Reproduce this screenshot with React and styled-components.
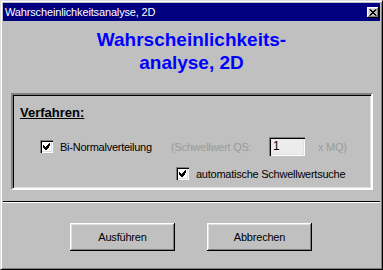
import styled, { createGlobalStyle } from "styled-components"

const GlobalStyle = createGlobalStyle`
    body {
        margin: 0;
        background: #c0c0c0;
        font-family: "Liberation Sans", Arial, sans-serif;
    }
`

export default function App(){
    return(
        <>
            <GlobalStyle />
            <Window>
                <TitleBar>
                    <span>Wahrscheinlichkeitsanalyse, 2D</span>
                    <CloseButton>
                        <svg width="8" height="7" viewBox="0 0 8 7" shapeRendering="crispEdges">
                            <path d="M0 0h2v1h-2zM6 0h2v1h-2zM1 1h2v1h-2zM5 1h2v1h-2zM2 2h4v1h-4zM3 3h2v1h-2zM2 4h4v1h-4zM1 5h2v1h-2zM5 5h2v1h-2zM0 6h2v1h-2zM6 6h2v1h-2z" fill="#000" />
                        </svg>
                    </CloseButton>
                </TitleBar>

                <Heading>Wahrscheinlichkeits-<br />analyse, 2D</Heading>

                <Group>
                    <GroupTitle>Verfahren:</GroupTitle>
                    <Row indent={27}>
                        <Checkbox checked />
                        <Label width={111}>Bi-Normalverteilung</Label>
                        <Label width={98} disabled>(Schwellwert QS:</Label>
                        <Field>1</Field>
                        <Label disabled>x MQ)</Label>
                    </Row>
                    <Row indent={163} top={11}>
                        <Checkbox checked />
                        <Label>automatische Schwellwertsuche</Label>
                    </Row>
                </Group>

                <Separator />

                <Footer>
                    <Button>Ausführen</Button>
                    <Button>Abbrechen</Button>
                </Footer>
            </Window>
        </>
    )
}

function Checkbox({ checked }){
    return(
        <CheckBox>
            {checked && (
                <svg width="7" height="7" viewBox="0 0 7 7" shapeRendering="crispEdges">
                    <path d="M6 0h1v3h-1zM5 1h1v4h-1zM4 2h1v4h-1zM3 3h1v4h-1zM2 4h1v3h-1zM1 3h1v3h-1zM0 2h1v3h-1z" fill="#000" />
                </svg>
            )}
        </CheckBox>
    )
}

const sunken = `
    box-shadow:
        inset 1px 1px #808080,
        inset 2px 2px #000,
        inset -1px -1px #fff,
        inset -2px -2px #dfdfdf;
`

const raised = `
    box-shadow:
        inset -1px -1px #000,
        inset 1px 1px #fff,
        inset -2px -2px #808080,
        inset 2px 2px #dfdfdf;
`

const Window = styled.div`
    width: 383px;
    height: 270px;
    box-sizing: border-box;
    background: #c0c0c0;
    border: 1px solid;
    border-color: #dfdfdf #000 #000 #dfdfdf;
    box-shadow: inset 1px 1px #fff, inset -1px -1px #808080;
    padding: 2px;
    display: flex;
    flex-direction: column;
`

const TitleBar = styled.div`
    height: 18px;
    background: #000080;
    color: #fff;
    font-size: 11px;
    letter-spacing: -0.15px;
    display: flex;
    align-items: center;
    justify-content: space-between;
    padding: 0 1px 0 2px;
`

const CloseButton = styled.div`
    width: 12px;
    height: 11px;
    background: #c0c0c0;
    ${raised}
    display: flex;
    align-items: center;
    justify-content: center;
    svg { display: block; transform: scale(0.9); }
`

const Heading = styled.h1`
    margin: 7px 0 0;
    text-align: center;
    color: #0000ff;
    font-size: 19px;
    font-weight: 700;
    line-height: 23px;
`

const Group = styled.div`
    margin: 19px 7px 0 8px;
    height: 97px;
    box-sizing: border-box;
    border: 2px solid;
    border-color: #808080 #fff #fff #808080;
    box-shadow: inset 1px 1px #000, inset -1px -1px #dfdfdf;
    padding: 10px 7px 0;
`

const GroupTitle = styled.div`
    font-size: 13px;
    font-weight: 700;
    line-height: 15px;
    text-decoration: underline;
`

const Row = styled.div`
    display: flex;
    align-items: center;
    margin-top: ${props => props.top ?? 17}px;
    padding-left: ${props => props.indent - 7}px;
    font-size: 11px;
    letter-spacing: -0.25px;
    color: #000;
`

const CheckBox = styled.div`
    width: 13px;
    height: 13px;
    flex: none;
    background: #fff;
    ${sunken}
    display: flex;
    align-items: center;
    justify-content: center;
    margin-right: 7px;
`

const Label = styled.span`
    width: ${props => props.width ? props.width + "px" : "auto"};
    flex: none;
    color: ${props => props.disabled ? "#9a9a9a" : "#000"};
    white-space: nowrap;
`

const Field = styled.div`
    width: 36px;
    height: 19px;
    box-sizing: border-box;
    background: #ececec;
    ${sunken}
    padding: 0 4px;
    line-height: 19px;
    font-size: 12px;
    color: #000;
    margin-right: 13px;
`

const Separator = styled.div`
    margin-top: 11px;
    height: 1px;
    background: #000;
    border-bottom: 1px solid #fff;
`

const Footer = styled.div`
    display: flex;
    justify-content: center;
    gap: 32px;
    margin-top: 20px;
    padding-right: 1px;
`

const Button = styled.div`
    width: 105px;
    height: 28px;
    box-sizing: border-box;
    ${raised}
    display: flex;
    align-items: center;
    justify-content: center;
    font-size: 11px;
    letter-spacing: -0.2px;
`
